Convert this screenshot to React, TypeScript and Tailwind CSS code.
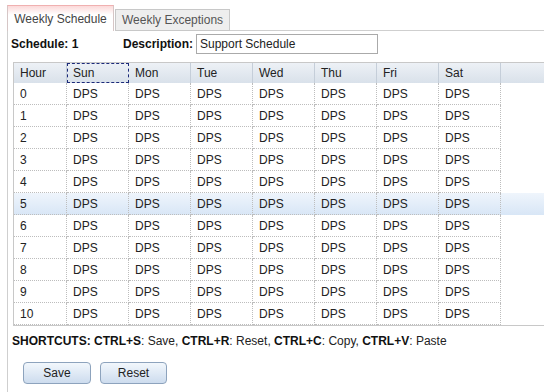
import React from "react";

const days = ["Sun", "Mon", "Tue", "Wed", "Thu", "Fri", "Sat"];
const hours = [0, 1, 2, 3, 4, 5, 6, 7, 8, 9, 10];

export default function App() {
  return (
    <div className="w-[544px] h-[392px] overflow-hidden bg-white font-['Liberation_Sans',Arial,sans-serif] text-[12px] text-[#222] leading-none">
      {/* Tabs */}
      <div className="flex items-end pl-[7px] pt-[5px] h-[31px]">
        <div className="h-[26px] w-[107px] border-l border-r border-t border-[#d6c6c6] border-t-[#f0b0b0] bg-gradient-to-b from-[#fbd9d9] via-white via-[35%] to-white flex items-center justify-center text-[#444]">
          Weekly Schedule
        </div>
        <div className="ml-[1px] h-[22px] w-[115px] border border-[#c8c8c8] bg-[#eeeeee] flex items-center justify-center text-[#555]">
          Weekly Exceptions
        </div>
        <div className="flex-1 border-b border-[#cfcfcf]" />
      </div>

      {/* Panel */}
      <div className="ml-[7px] border-l border-[#cfcfcf] h-[361px] pl-[3px] flex flex-col">
        <div className="flex items-center h-[21px] mt-[2px]">
          <span className="font-bold text-[#111] w-[112px]">Schedule: 1</span>
          <span className="font-bold text-[#111] w-[73px]">Description:</span>
          <div className="w-[182px] h-[20px] border border-[#aaa] flex items-center pl-[3px] text-[#222]">
            Support Schedule
          </div>
        </div>

        {/* Grid */}
        <div className="ml-[2px] mt-[8px] border-l border-t border-b border-[#c8c8c8] flex flex-col">
          <div className="flex h-[20px] bg-gradient-to-b from-[#edf1f6] to-[#d9e1ea]">
            <div className="w-[53px] border-r border-[#c5ced9] flex items-center pl-[6px] text-[#222]">Hour</div>
            {days.map((d, i) => (
              <div
                key={d}
                className={
                  i === 0
                    ? "w-[62px] border border-dashed border-[#1c2a7a] flex items-center pl-[5px] text-[#222]"
                    : "w-[62px] border-r border-[#c5ced9] flex items-center pl-[6px] text-[#222]"
                }
              >
                {d}
              </div>
            ))}
            <div className="flex-1" />
          </div>
          {hours.map((h) => (
            <div
              key={h}
              className={
                h === 5
                  ? "flex h-[22px] bg-gradient-to-b from-[#eff5fc] to-[#d8e6f6]"
                  : "flex h-[22px]"
              }
            >
              <div className="w-[53px] border-r border-b border-dotted border-[#bdbdbd] flex items-center pl-[6px]">{h}</div>
              {days.map((d) => (
                <div key={d} className="w-[62px] border-r border-b border-dotted border-[#bdbdbd] flex items-center pl-[6px]">
                  DPS
                </div>
              ))}
              <div className="flex-1" />
            </div>
          ))}
        </div>

        <div className="mt-[9px] pl-[1px] text-[#222]">
          <b className="text-[#111]">SHORTCUTS: CTRL+S</b>: Save, <b className="text-[#111]">CTRL+R</b>: Reset,{" "}
          <b className="text-[#111]">CTRL+C</b>: Copy, <b className="text-[#111]">CTRL+V</b>: Paste
        </div>

        <div className="flex gap-[9px] ml-[12px] mt-[15px]">
          <button className="w-[68px] h-[22px] rounded-[4px] border border-[#8da3bd] bg-gradient-to-b from-[#f2f7fc] to-[#cddcee] text-[#222] text-[12px]">
            Save
          </button>
          <button className="w-[67px] h-[22px] rounded-[4px] border border-[#8da3bd] bg-gradient-to-b from-[#f2f7fc] to-[#cddcee] text-[#222] text-[12px]">
            Reset
          </button>
        </div>
      </div>
    </div>
  );
}
